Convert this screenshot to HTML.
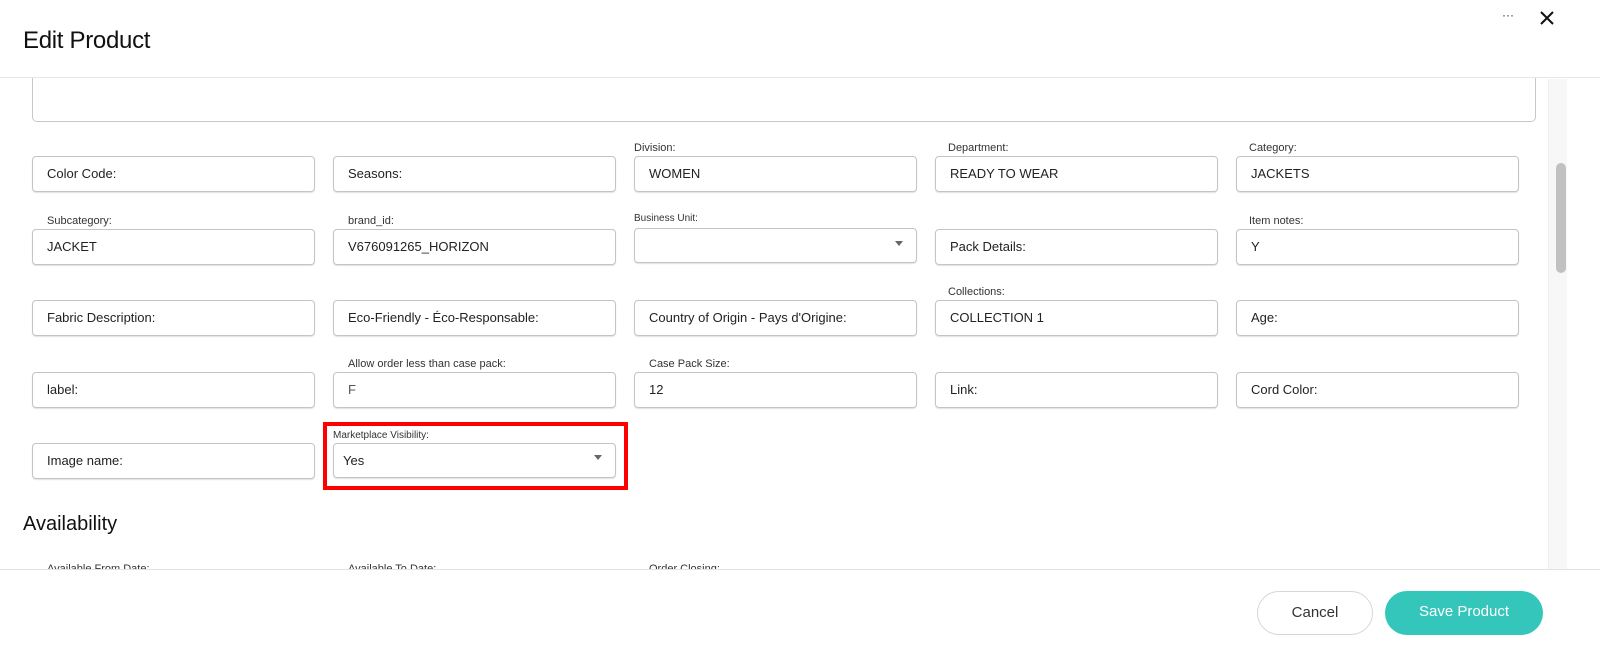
<!DOCTYPE html>
<html><head><style>
*{box-sizing:border-box;margin:0;padding:0}
body{width:1600px;height:664px;overflow:hidden;background:#fff;font-family:"Liberation Sans",sans-serif;position:relative;color:#222}
.hdr{position:absolute;left:0;top:0;width:1600px;height:78px;border-bottom:1px solid #e6e6e6;background:#fff;z-index:2}
.hdr h1{position:absolute;left:23px;top:27px;font-weight:normal;font-size:24px;color:#111;letter-spacing:-0.3px}
.box{position:absolute;height:36px;border:1px solid #c4c4c4;border-radius:4px;box-shadow:0 1px 1px rgba(0,0,0,.12);font-size:13px;line-height:34px;padding-left:14px;color:#222}
.lbl{position:absolute;font-size:11px;color:#333}
.arr{position:absolute;right:13px;top:15px;width:0;height:0;border-left:4px solid transparent;border-right:4px solid transparent;border-top:5px solid #666}
.ftr{position:absolute;left:0;top:569px;width:1600px;height:95px;border-top:1px solid #e3e3e3;background:#fff}
.btn{position:absolute;top:21px;height:44px;border-radius:22px;font-size:15px;text-align:center;line-height:42px}
</style></head><body>
<div class="hdr"><h1>Edit Product</h1>
<div style="position:absolute;left:1502px;top:8px;font-size:12px;color:#333">···</div>
<svg style="position:absolute;left:1539px;top:10px" width="16" height="16" viewBox="0 0 16 16"><path d="M2 2L14 14M14 2L2 14" stroke="#111" stroke-width="2"/></svg>
</div>
<div style="position:absolute;left:32px;top:60px;width:1504px;height:62px;border:1px solid #c8c8c8;border-radius:5px"></div>
<div style="position:absolute;left:1548px;top:79px;width:19px;height:490px;background:#f7f7f7;border-left:1px solid #eee"></div>
<div style="position:absolute;left:1556px;top:163px;width:10px;height:110px;background:#c1c1c1;border-radius:5px"></div>

<div class="box" style="left:32px;top:156px;width:283px">Color Code:</div>
<div class="box" style="left:333px;top:156px;width:283px">Seasons:</div>
<div class="lbl" style="left:634px;top:142px">Division:</div>
<div class="box" style="left:634px;top:156px;width:283px">WOMEN</div>
<div class="lbl" style="left:948px;top:142px">Department:</div>
<div class="box" style="left:935px;top:156px;width:283px">READY TO WEAR</div>
<div class="lbl" style="left:1249px;top:142px">Category:</div>
<div class="box" style="left:1236px;top:156px;width:283px">JACKETS</div>

<div class="lbl" style="left:47px;top:215px">Subcategory:</div>
<div class="box" style="left:32px;top:229px;width:283px">JACKET</div>
<div class="lbl" style="left:348px;top:215px">brand_id:</div>
<div class="box" style="left:333px;top:229px;width:283px">V676091265_HORIZON</div>
<div class="lbl" style="left:634px;top:213px;font-size:10px">Business Unit:</div>
<div class="box" style="left:634px;top:228px;width:283px;height:35px"><div class="arr" style="top:12px"></div></div>
<div class="box" style="left:935px;top:229px;width:283px">Pack Details:</div>
<div class="lbl" style="left:1249px;top:215px">Item notes:</div>
<div class="box" style="left:1236px;top:229px;width:283px">Y</div>

<div class="box" style="left:32px;top:300px;width:283px">Fabric Description:</div>
<div class="box" style="left:333px;top:300px;width:283px">Eco-Friendly - Éco-Responsable:</div>
<div class="box" style="left:634px;top:300px;width:283px">Country of Origin - Pays d'Origine:</div>
<div class="lbl" style="left:948px;top:286px">Collections:</div>
<div class="box" style="left:935px;top:300px;width:283px">COLLECTION 1</div>
<div class="box" style="left:1236px;top:300px;width:283px">Age:</div>

<div class="box" style="left:32px;top:372px;width:283px">label:</div>
<div class="lbl" style="left:348px;top:358px">Allow order less than case pack:</div>
<div class="box" style="left:333px;top:372px;width:283px;color:#555">F</div>
<div class="lbl" style="left:649px;top:358px">Case Pack Size:</div>
<div class="box" style="left:634px;top:372px;width:283px">12</div>
<div class="box" style="left:935px;top:372px;width:283px">Link:</div>
<div class="box" style="left:1236px;top:372px;width:283px">Cord Color:</div>

<div class="box" style="left:32px;top:443px;width:283px">Image name:</div>
<div style="position:absolute;left:323px;top:422px;width:305px;height:68px;border:4px solid #f00"></div>
<div class="lbl" style="left:333px;top:430px;font-size:10px">Marketplace Visibility:</div>
<div class="box" style="left:333px;top:443px;width:283px;height:35px;padding-left:9px">Yes<div class="arr" style="top:11px"></div></div>

<div style="position:absolute;left:23px;top:513px;font-size:20px;color:#111">Availability</div>
<div class="lbl" style="left:47px;top:563px">Available From Date:</div>
<div class="lbl" style="left:348px;top:563px">Available To Date:</div>
<div class="lbl" style="left:649px;top:563px">Order Closing:</div>

<div class="ftr">
<div class="btn" style="left:1257px;width:116px;border:1px solid #d6d6d6;color:#333">Cancel</div>
<div class="btn" style="left:1385px;width:158px;background:#34c6bb;color:#fff">Save Product</div>
</div>
</body></html>
